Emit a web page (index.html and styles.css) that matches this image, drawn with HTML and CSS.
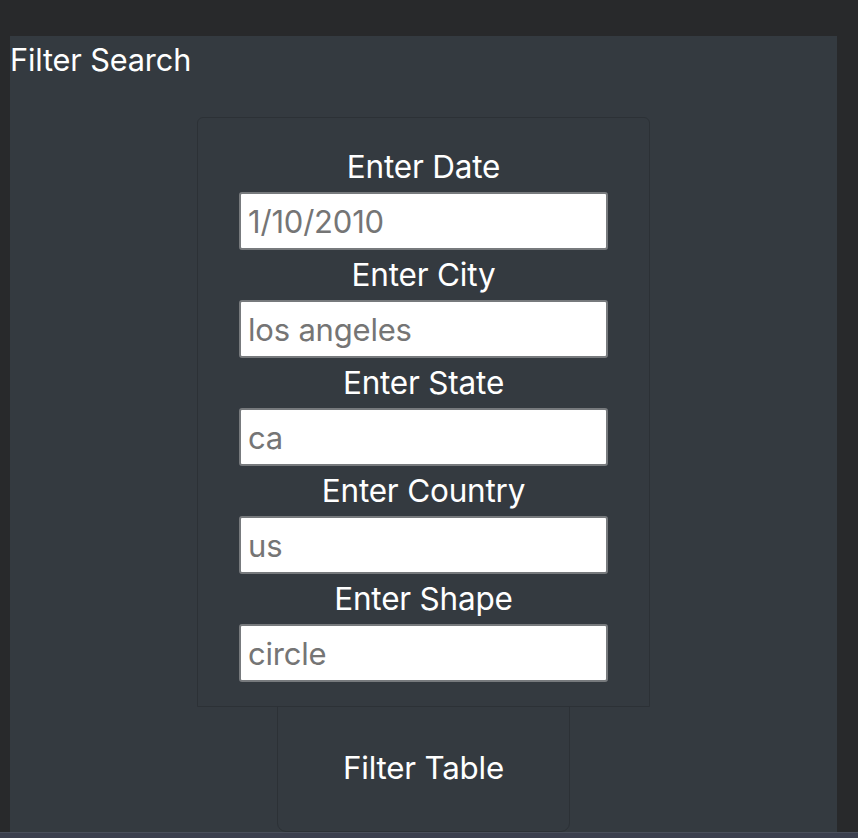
FILE: index.html
```html
<!DOCTYPE html>
<html lang="en">
<head>
<meta charset="utf-8">
<title>Filter Search</title>
<link rel="stylesheet" href="styles.css">
</head>
<body>
<div class="page">
  <div class="panel">
    <h3 class="title">Filter Search</h3>
    <form class="filters">
      <label class="field-label" for="date">Enter Date</label>
      <input class="field" id="date" type="text" placeholder="1/10/2010">
      <label class="field-label" for="city">Enter City</label>
      <input class="field" id="city" type="text" placeholder="los angeles">
      <label class="field-label" for="state">Enter State</label>
      <input class="field" id="state" type="text" placeholder="ca">
      <label class="field-label" for="country">Enter Country</label>
      <input class="field" id="country" type="text" placeholder="us">
      <label class="field-label" for="shape">Enter Shape</label>
      <input class="field" id="shape" type="text" placeholder="circle">
    </form>
    <button class="filter-btn" type="button">Filter Table</button>
  </div>
</div>
<div class="dock"></div>
</body>
</html>
```

FILE: styles.css
```css
html, body {
  margin: 0;
  padding: 0;
  height: 100%;
}
body {
  background: #28292b;
  font-family: Inter, "Noto Sans", "Liberation Sans", sans-serif;
  color: #ffffff;
  overflow: hidden;
  display: flex;
  flex-direction: column;
}
.page {
  padding: 36px 21px 0 10px;
  height: 796px;
  display: flex;
}
.panel {
  flex: 1;
  background: #343a40;
  display: flex;
  flex-direction: column;
  align-items: center;
}
.title {
  align-self: flex-start;
  margin: 0;
  font-size: 30.7px;
  font-weight: 400;
  line-height: 48px;
  letter-spacing: -0.15px;
}
.filters {
  margin-top: 33px;
  width: 453px;
  box-sizing: border-box;
  border: 1px solid #2c3136;
  border-radius: 6px 6px 0 0;
  padding: 24px 0 24px;
  display: flex;
  flex-direction: column;
  align-items: center;
}
.field-label {
  font-size: 31.5px;
  line-height: 50px;
  height: 50px;
  letter-spacing: -0.2px;
}
.field {
  width: 369px;
  height: 58px;
  box-sizing: border-box;
  border: 2px solid #777a7d;
  border-radius: 3px;
  background: #ffffff;
  padding: 0 7px;
  font-family: inherit;
  font-size: 31px;
  letter-spacing: -0.2px;
  color: #333;
  outline: none;
}
.field::placeholder {
  color: #757575;
}
.filter-btn {
  width: 293px;
  height: 126px;
  margin-top: -1px;
  background: #343a40;
  border: 1px solid #2c3136;
  border-radius: 0 0 9px 9px;
  color: #ffffff;
  font-family: inherit;
  font-size: 31.3px;
  letter-spacing: -0.2px;
  padding: 0 0 2px;
}
.dock {
  flex: 1;
  background: #3b3f4e;
  border-top: 1px solid #4a4f5c;
}
```
